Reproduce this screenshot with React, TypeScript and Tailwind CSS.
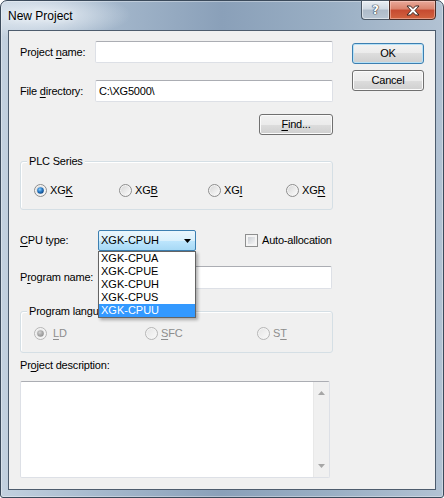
import React from "react";

function U({ children }: { children: React.ReactNode }) {
  return <span className="underline underline-offset-[2px] decoration-[1px]">{children}</span>;
}

function Radio({ id, checked, disabled }: { id: string; checked?: boolean; disabled?: boolean }) {
  const stroke = disabled ? "#b5b5b5" : "#8c8c8c";
  return (
    <svg width="13" height="13" viewBox="0 0 13 13" className="shrink-0">
      <defs>
        <linearGradient id={`f-${id}`} x1="0" y1="0" x2="1" y2="1">
          <stop offset="0" stopColor={disabled ? "#e6e6e6" : "#d8d8d8"} />
          <stop offset="1" stopColor={disabled ? "#f8f8f8" : "#fbfbfb"} />
        </linearGradient>
        <radialGradient id={`d-${id}`} cx="0.4" cy="0.35" r="0.7">
          <stop offset="0" stopColor={disabled ? "#d4d4d4" : "#8fd2ff"} />
          <stop offset="0.5" stopColor={disabled ? "#acacac" : "#2a7cc8"} />
          <stop offset="1" stopColor={disabled ? "#8f8f8f" : "#0b3f7a"} />
        </radialGradient>
      </defs>
      <circle cx="6.5" cy="6.5" r="6" fill="#f4f4f4" stroke={stroke} />
      <circle cx="6.5" cy="6.5" r="4.5" fill={`url(#f-${id})`} />
      {checked && <circle cx="6.5" cy="6.5" r="3.3" fill={`url(#d-${id})`} />}
    </svg>
  );
}

function Input({ w, h, children }: { w: string; h: string; children?: React.ReactNode }) {
  return (
    <div
      className={`${w} ${h} flex items-center rounded-[2px] border border-[#dde0e6] border-t-[#abadb3] bg-white pl-[3px]`}
    >
      {children}
    </div>
  );
}

function Button({ w, children, def }: { w: string; children: React.ReactNode; def?: boolean }) {
  return (
    <div
      className={`${w} flex h-[21px] items-center justify-center rounded-[3px] border bg-[linear-gradient(#f2f2f2_0%,#ebebeb_50%,#dddddd_50%,#cfcfcf_100%)] ${
        def
          ? "border-[#3c7fb1] shadow-[inset_0_0_0_1px_#b6e1f7]"
          : "border-[#707070] shadow-[inset_0_0_0_1px_#fbfbfb]"
      }`}
    >
      {children}
    </div>
  );
}

export default function App() {
  return (
    <div className="h-[498px] w-[444px] font-['Liberation_Sans',Arial,sans-serif] text-[11px] leading-[13px] tracking-[-0.2px] text-black">
      <div className="flex h-[498px] flex-col rounded-t-[7px] rounded-b-[3px] border border-[#3b4a5b] bg-[radial-gradient(ellipse_90px_24px_at_40px_14px,rgba(235,241,247,0.95),rgba(235,241,247,0)),linear-gradient(90deg,#c3d1df_0%,#a6b9cd_22%,#8aa0b9_50%,#9aafc4_75%,#b2c2d3_100%)] px-[7px] pb-[7px] shadow-[inset_0_0_0_1px_rgba(255,255,255,0.35)]">
        {/* Title bar */}
        <div className="flex h-[29px] shrink-0 items-start">
          <div className="pt-[7px] text-[12px] leading-[16px] tracking-normal text-black [text-shadow:0_0_6px_#f4f8fb]">
            New Project
          </div>
          <div className="-mt-px ml-auto flex">
            <div className="flex h-[20px] w-[28px] items-center justify-center rounded-bl-[4px] border border-r-0 border-[#4b5866] bg-[linear-gradient(#e9eef3_0%,#d0d9e2_45%,#aebbc9_50%,#b9c6d3_100%)] shadow-[inset_0_0_0_1px_rgba(255,255,255,0.5)]">
              <span className="font-['DejaVu_Sans',sans-serif] text-[12px] font-bold leading-[12px] text-white [text-shadow:0_0_1px_#2a3440,0_0_1px_#2a3440,0_0_1px_#2a3440]">
                ?
              </span>
            </div>
            <div className="flex h-[20px] w-[47px] items-center justify-center rounded-br-[4px] border border-[#4b2c25] bg-[linear-gradient(#e9a99a_0%,#d9826c_45%,#c64a30_50%,#d2633f_100%)] shadow-[inset_0_0_0_1px_rgba(255,220,210,0.45)]">
              <svg width="14" height="11" viewBox="0 0 14 11">
                <polygon
                  points="1,1 4.5,1 7,3.6 9.5,1 13,1 9,5.5 13,10 9.5,10 7,7.4 4.5,10 1,10 5,5.5"
                  fill="#ffffff"
                  stroke="#3b2622"
                  strokeWidth="1"
                  strokeLinejoin="round"
                />
              </svg>
            </div>
          </div>
        </div>

        {/* Client area */}
        <div className="flex flex-1 border border-[#4d5c6d] bg-[#f0f0f0]">
          {/* Left column */}
          <div className="ml-[11px] flex w-[313px] flex-col">
            <div className="mt-[10px] flex h-[22px] items-center">
              <span className="w-[75px] shrink-0">
                Project <U>n</U>ame:
              </span>
              <Input w="w-[238px]" h="h-[22px]" />
            </div>
            <div className="mt-[17px] flex h-[22px] items-center">
              <span className="w-[75px] shrink-0">
                File <U>d</U>irectory:
              </span>
              <Input w="w-[238px]" h="h-[22px]">
                C:\XG5000\
              </Input>
            </div>
            <div className="mt-[12px] self-end">
              <Button w="w-[74px]">
                <span>
                  <U>F</U>ind...
                </span>
              </Button>
            </div>

            {/* PLC Series group */}
            <div className="relative mt-[26px] h-[49px] rounded-[3px] border border-[#d5dfe5] shadow-[inset_1px_1px_0_#fff]">
              <span className="absolute -top-[7px] left-[6px] bg-[#f0f0f0] px-[2px]">PLC Series</span>
              <div className="flex pl-[13px] pt-[22px]">
                <div className="flex w-[85px] items-center">
                  <Radio id="xgk" checked />
                  <span className="ml-[3px]">
                    XG<U>K</U>
                  </span>
                </div>
                <div className="flex w-[89px] items-center">
                  <Radio id="xgb" />
                  <span className="ml-[3px]">
                    XG<U>B</U>
                  </span>
                </div>
                <div className="flex w-[78px] items-center">
                  <Radio id="xgi" />
                  <span className="ml-[3px]">
                    XG<U>I</U>
                  </span>
                </div>
                <div className="flex items-center">
                  <Radio id="xgr" />
                  <span className="ml-[3px]">
                    XG<U>R</U>
                  </span>
                </div>
              </div>
            </div>

            {/* CPU type row */}
            <div className="relative z-10 mt-[20px] flex h-[21px] items-center">
              <span className="w-[78px] shrink-0">
                <U>C</U>PU type:
              </span>
              <div className="relative shrink-0">
                <div className="flex h-[21px] w-[98px] items-center rounded-[2px] border border-[#3c7fb1] bg-[linear-gradient(#eaf6fd_0%,#d9f0fc_50%,#bee6fd_50%,#a7d9f5_100%)] pl-[2px] pr-[4px] tracking-normal">
                  <span className="flex-1">XGK-CPUH</span>
                  <svg width="7" height="4" viewBox="0 0 7 4">
                    <polygon points="0,0 7,0 3.5,4" fill="#000" />
                  </svg>
                </div>
                <div className="absolute left-0 top-[21px] w-[98px] border border-[#646464] bg-white tracking-normal shadow-[2px_2px_3px_rgba(0,0,0,0.3)]">
                  {["XGK-CPUA", "XGK-CPUE", "XGK-CPUH", "XGK-CPUS", "XGK-CPUU"].map((t, i) => (
                    <div
                      key={t}
                      className={`h-[13px] pl-[2px] leading-[13px] ${
                        i === 4 ? "bg-[#3399ff] text-white" : ""
                      }`}
                    >
                      {t}
                    </div>
                  ))}
                </div>
              </div>
              <div className="ml-[49px] flex shrink-0 items-center whitespace-nowrap">
                <div className="h-[13px] w-[13px] border border-[#8e8f8f] bg-[#f4f4f4] p-[2px]">
                  <div className="h-full w-full bg-[linear-gradient(135deg,#cbcfd5,#f4f4f4)]" />
                </div>
                <span className="ml-[4px]">Auto-allocation</span>
              </div>
            </div>

            {/* Program name */}
            <div className="mt-[15px] flex h-[23px] items-center">
              <span className="w-[78px] shrink-0">
                P<U>r</U>ogram name:
              </span>
              <Input w="w-[234px]" h="h-[23px]" />
            </div>

            {/* Program language group */}
            <div className="relative mt-[22px] h-[42px] rounded-[3px] border border-[#d5dfe5] shadow-[inset_1px_1px_0_#fff]">
              <span className="absolute -top-[7px] left-[6px] bg-[#f0f0f0] px-[2px]">Program language</span>
              <div className="flex pl-[13px] pt-[15px] text-[#8d8d8d]">
                <div className="flex w-[111px] items-center">
                  <Radio id="ld" checked disabled />
                  <span className="ml-[6px]">
                    <U>L</U>D
                  </span>
                </div>
                <div className="flex w-[112px] items-center">
                  <Radio id="sfc" disabled />
                  <span className="ml-[3px]">
                    <U>S</U>FC
                  </span>
                </div>
                <div className="flex items-center">
                  <Radio id="st" disabled />
                  <span className="ml-[3px]">
                    S<U>T</U>
                  </span>
                </div>
              </div>
            </div>

            <div className="mt-[6px]">
              Pr<U>o</U>ject description:
            </div>

            <div className="mt-[9px] flex h-[97px] w-[310px] justify-end rounded-[2px] border border-[#dde0e6] border-t-[#abadb3] bg-white">
              <div className="flex w-[16px] flex-col items-center justify-between border-l border-[#e8e8e8] bg-[#f0f0f0] py-[9px]">
                <svg width="7" height="4" viewBox="0 0 7 4">
                  <polygon points="3.5,0 7,4 0,4" fill="#a6a6a6" />
                </svg>
                <svg width="7" height="4" viewBox="0 0 7 4">
                  <polygon points="0,0 7,0 3.5,4" fill="#a6a6a6" />
                </svg>
              </div>
            </div>
          </div>

          {/* Right column */}
          <div className="ml-[19px] flex w-[72px] flex-col">
            <div className="mt-[12px]">
              <Button w="w-[72px]" def>
                OK
              </Button>
            </div>
            <div className="mt-[6px]">
              <Button w="w-[72px]">Cancel</Button>
            </div>
          </div>
        </div>
      </div>
    </div>
  );
}
